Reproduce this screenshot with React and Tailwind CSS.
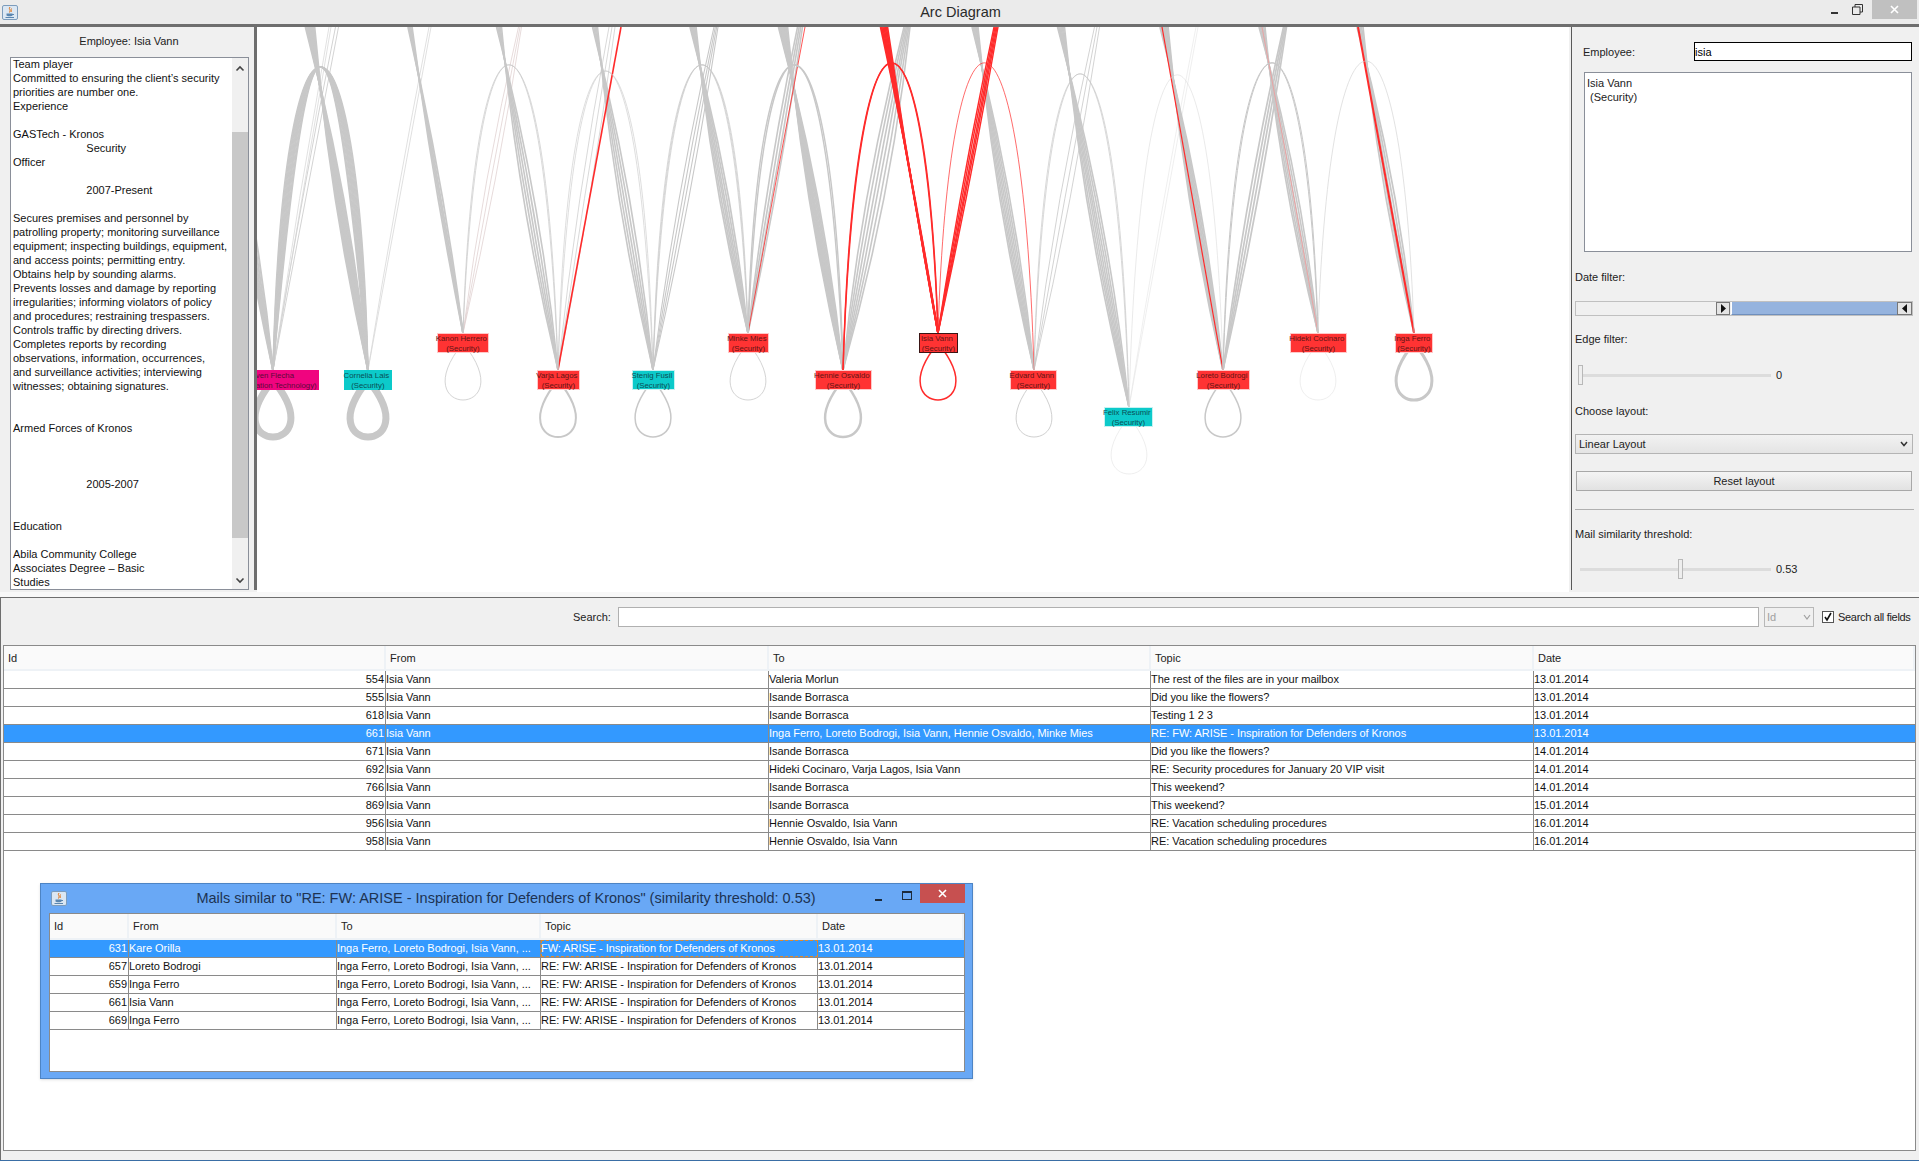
import React from "react";

const GREY = "#c8c8c8";
const RED = "#ff2b2b";

const NODES = [
  { name: "Sven Flecha", dept: "(Information Technology)", cx: 273, left: 229, right: 319, top: 370, box: "bg-[#f0047f] border-[#f0047f] text-[#5c0a3a]" },
  { name: "Cornelia Lais", dept: "(Security)", cx: 368, left: 344, right: 392, top: 370, box: "bg-[#0ccaca] border-[#0ccaca] text-[#0a4f55]" },
  { name: "Kanon Herrero", dept: "(Security)", cx: 463, left: 437, right: 489, top: 333, box: "bg-[#ff3333] border-[#ffc9c9] text-[#5f1414]" },
  { name: "Varja Lagos", dept: "(Security)", cx: 558, left: 537, right: 580, top: 370, box: "bg-[#ff3333] border-[#ffc9c9] text-[#5f1414]" },
  { name: "Stenig Fusil", dept: "(Security)", cx: 653, left: 632, right: 675, top: 370, box: "bg-[#0ccaca] border-[#c5f2f2] text-[#0a4f55]" },
  { name: "Minke Mies", dept: "(Security)", cx: 748, left: 728, right: 769, top: 333, box: "bg-[#ff3333] border-[#ffc9c9] text-[#5f1414]" },
  { name: "Hennie Osvaldo", dept: "(Security)", cx: 843, left: 815, right: 872, top: 370, box: "bg-[#ff3333] border-[#ffc9c9] text-[#5f1414]" },
  { name: "Isia Vann", dept: "(Security)", cx: 938, left: 919, right: 958, top: 333, box: "bg-[#ff3333] border-[#3a1515] text-[#5f1414]" },
  { name: "Edvard Vann", dept: "(Security)", cx: 1034, left: 1010, right: 1057, top: 370, box: "bg-[#ff3333] border-[#ffc9c9] text-[#5f1414]" },
  { name: "Felix Resumir", dept: "(Security)", cx: 1129, left: 1104, right: 1153, top: 407, box: "bg-[#0ccaca] border-[#c5f2f2] text-[#0a4f55]" },
  { name: "Loreto Bodrogi", dept: "(Security)", cx: 1223, left: 1197, right: 1250, top: 370, box: "bg-[#ff3333] border-[#ffc9c9] text-[#5f1414]" },
  { name: "Hideki Cocinaro", dept: "(Security)", cx: 1318, left: 1290, right: 1347, top: 333, box: "bg-[#ff3333] border-[#ffc9c9] text-[#5f1414]" },
  { name: "Inga Ferro", dept: "(Security)", cx: 1414, left: 1395, right: 1433, top: 333, box: "bg-[#ff3333] border-[#ffc9c9] text-[#5f1414]" },
];

// node, x where it leaves the top, spread there, line count, width, colour
const FANS = [
  [0, 216, 8, 6, 2, GREY], [0, 337, 3, 2, 0.8, GREY], [0, 330, 2, 2, 0.7, "#d4d4d4"],
  [1, 310, 9, 8, 2, GREY], [1, 430, 2, 2, 0.8, "#d8d8d8"],
  [2, 410, 4, 4, 1.8, GREY], [2, 520, 3, 3, 0.7, "#dccccc"],
  [3, 499, 5, 5, 1.6, GREY], [3, 612, 6, 3, 0.7, GREY],
  [4, 595, 5, 5, 1.6, GREY], [4, 716, 4, 4, 1.1, GREY],
  [5, 693, 6, 6, 1.7, GREY], [5, 800, 5, 4, 1.6, GREY],
  [6, 783, 9, 9, 1.8, GREY], [6, 907, 6, 6, 1.6, GREY],
  [8, 975, 6, 7, 1.6, GREY], [8, 1097, 5, 3, 0.8, GREY],
  [9, 1061, 7, 7, 1.6, GREY], [9, 1197, 2, 2, 0.6, "#e4e4e4"],
  [10, 1164, 8, 8, 1.8, GREY], [10, 1285, 3, 4, 1.7, GREY],
  [11, 1262, 6, 6, 1.6, GREY],
  [12, 1360, 6, 5, 1.7, GREY],
  [3, 621, 0, 1, 1.6, RED], [5, 805, 0, 1, 0.8, RED],
  [7, 884, 7, 7, 1.7, RED], [7, 996, 4, 5, 1.4, RED],
  [10, 1162, 0, 1, 1.2, RED], [11, 1262, 0, 1, 0.6, "#ff8a8a"], [12, 1358, 0, 1, 2, RED],
];

// left node, right node, peak y, bow from, bow to, line count, width, colour
const ARCHES = [
  [0, 1, 67, 0.1, 0.4, 10, 1.5, GREY],
  [2, 3, 65, 0.12, 0.16, 2, 0.7, GREY],
  [3, 4, 71, 0.1, 0.16, 2, 0.6, GREY],
  [4, 5, 65, 0.1, 0.16, 3, 0.7, GREY],
  [5, 6, 65, 0.1, 0.16, 2, 1.4, GREY],
  [6, 7, 63, 0.12, 0.14, 2, 1.4, RED],
  [7, 8, 63, 0.12, 0.12, 1, 0.7, RED],
  [8, 9, 74, 0.1, 0.14, 2, 0.7, GREY],
  [9, 10, 75, 0.12, 0.12, 1, 0.6, "#dcdcdc"],
  [10, 11, 63, 0.1, 0.14, 2, 1, GREY],
  [11, 12, 61, 0.12, 0.12, 1, 0.6, "#cfcfcf"],
];

// node, loop stroke, colour
const LOOPS = [
  [0, 7, GREY], [1, 7, GREY], [2, 1, "#d4d4d4"], [3, 2, GREY], [4, 1.5, GREY], [5, 1, "#d4d4d4"], [6, 2.5, GREY],
  [7, 1.5, RED], [8, 1, "#d0d0d0"], [9, 0.5, "#dcdcdc"], [10, 1.5, GREY], [11, 0.5, "#dcdcdc"], [12, 3, GREY],
];

const BIO = [
  "Team player", "Committed to ensuring the client’s security", "priorities are number one.", "Experience", "",
  "GASTech - Kronos", "                        Security", "Officer", "", "                        2007-Present", "",
  "Secures premises and personnel by", "patrolling property; monitoring surveillance", "equipment; inspecting buildings, equipment,",
  "and access points; permitting entry.", "Obtains help by sounding alarms.", "Prevents losses and damage by reporting",
  "irregularities; informing violators of policy", "and procedures; restraining trespassers.", "Controls traffic by directing drivers.",
  "Completes reports by recording", "observations, information, occurrences,", "and surveillance activities; interviewing",
  "witnesses; obtaining signatures.", "", "", "Armed Forces of Kronos", "", "", "", "                        2005-2007", "", "",
  "Education", "", "Abila Community College", "Associates Degree – Basic", "Studies",
];

const MAILS = [
  [554, "Isia Vann", "Valeria Morlun", "The rest of the files are in your mailbox", "13.01.2014"],
  [555, "Isia Vann", "Isande Borrasca", "Did you like the flowers?", "13.01.2014"],
  [618, "Isia Vann", "Isande Borrasca", "Testing 1 2 3", "13.01.2014"],
  [661, "Isia Vann", "Inga Ferro, Loreto Bodrogi, Isia Vann, Hennie Osvaldo, Minke Mies", "RE: FW: ARISE - Inspiration for Defenders of Kronos", "13.01.2014"],
  [671, "Isia Vann", "Isande Borrasca", "Did you like the flowers?", "14.01.2014"],
  [692, "Isia Vann", "Hideki Cocinaro, Varja Lagos, Isia Vann", "RE: Security procedures for January 20 VIP visit", "14.01.2014"],
  [766, "Isia Vann", "Isande Borrasca", "This weekend?", "14.01.2014"],
  [869, "Isia Vann", "Isande Borrasca", "This weekend?", "15.01.2014"],
  [956, "Isia Vann", "Hennie Osvaldo, Isia Vann", "RE: Vacation scheduling procedures", "16.01.2014"],
  [958, "Isia Vann", "Hennie Osvaldo, Isia Vann", "RE: Vacation scheduling procedures", "16.01.2014"],
];

const TO_ALL = "Inga Ferro, Loreto Bodrogi, Isia Vann, ...";
const ARISE = "RE: FW: ARISE - Inspiration for Defenders of Kronos";
const SIMILAR = [
  [631, "Kare Orilla", TO_ALL, "FW: ARISE - Inspiration for Defenders of Kronos", "13.01.2014"],
  [657, "Loreto Bodrogi", TO_ALL, ARISE, "13.01.2014"],
  [659, "Inga Ferro", TO_ALL, ARISE, "13.01.2014"],
  [661, "Isia Vann", TO_ALL, ARISE, "13.01.2014"],
  [669, "Inga Ferro", TO_ALL, ARISE, "13.01.2014"],
];

const HEADERS = ["Id", "From", "To", "Topic", "Date"];

function JavaIcon() {
  return (
    <svg width="16" height="15" viewBox="0 0 16 15" className="shrink-0">
      <rect x="0.5" y="0.5" width="15" height="14" rx="1.5" fill="#dbe7f3" stroke="#7c9cbc" />
      <path d="M8 2 C6 4 9.5 5 7.5 7.5 M9.5 3.5 C8.5 5 10 5.5 9 7" fill="none" stroke="#e2761b" strokeWidth="1" />
      <path d="M4.5 8.5 H10.5 V10.5 C10.5 11.5 5 11.5 4.5 10.5 Z M10.5 9 H12 V10 H10.5" fill="#5a86b0" />
      <path d="M3.5 12.5 H12" stroke="#5a86b0" strokeWidth="1" />
    </svg>
  );
}

function Arcs() {
  const path = (d, w, c, key) => <path key={key} d={d} fill="none" stroke={c} strokeWidth={w} />;
  const out = [];
  FANS.forEach(([n, topX, spread, count, w, c], f) => {
    const node = NODES[n];
    // big fans hold arcs of many lengths, so they swell in the middle; the red ones stay tight
    const [lo, hi] = c === RED ? [0.42, 0.56] : count >= 5 ? [0.28, 0.72] : count >= 3 ? [0.36, 0.6] : [0.45, 0.5];
    for (let k = 0; k < count; k++) {
      const s = count > 1 ? k / (count - 1) : 0.5;
      const xt = topX - spread / 2 + spread * s;
      const cpx = node.cx + (xt - node.cx) * (lo + (hi - lo) * s);
      out.push(path(`M${node.cx} ${node.top} Q${cpx} ${(node.top + 27) / 2} ${xt} 27`, w, c, `f${f}-${k}`));
    }
  });
  ARCHES.forEach(([a, b, peak, from, to, count, w, c], i) => {
    const l = NODES[a];
    const r = NODES[b];
    const d = r.cx - l.cx;
    const cy = (peak - (l.top + r.top) / 8) / 0.75;
    for (let k = 0; k < count; k++) {
      const bow = count > 1 ? from + ((to - from) * k) / (count - 1) : from;
      out.push(path(`M${l.cx} ${l.top} C${l.cx + bow * d} ${cy} ${r.cx - bow * d} ${cy} ${r.cx} ${r.top}`, w, c, `a${i}-${k}`));
    }
  });
  LOOPS.forEach(([n, w, c]) => {
    const node = NODES[n];
    const y = node.top + 10;
    out.push(path(`M${node.cx} ${y} C${node.cx - 62} ${y + 76} ${node.cx + 62} ${y + 76} ${node.cx} ${y}`, w, c, `l${n}`));
  });
  return (
    <svg width="1313" height="565" viewBox="257 27 1313 565" className="absolute inset-0">
      {out}
    </svg>
  );
}

function DiagramNode({ node }) {
  return (
    <div
      className={`absolute h-[20px] border leading-[10px] text-[7.8px] ${node.box}`}
      style={{ left: node.left - 257, top: node.top - 27, width: node.right - node.left }}
    >
      <div className="flex justify-center pr-[3px] whitespace-nowrap">{node.name}</div>
      <div className="flex justify-center whitespace-nowrap">{node.dept}</div>
    </div>
  );
}

function SliderRow({ track, thumbAt, value, gap }) {
  return (
    <div className={`flex items-center h-[20px] ${gap}`}>
      <div className={`relative h-[3px] bg-[#dcdcdc] ${track}`}>
        <div className={`absolute top-[-9px] w-[5px] h-[20px] bg-[#eeeeee] border border-[#b8b8b8] ${thumbAt}`} />
      </div>
      <span className="ml-[5px] text-[#222]">{value}</span>
    </div>
  );
}

function MailRow({ row, grid, selected, focusTopic }) {
  const cell = "h-full pr-[1px] border-r truncate leading-[17px] tracking-[-0.04px]";
  return (
    <div className={`grid h-[18px] border-b border-[#8a8a8a] ${grid} ${selected ? "bg-[#3399ff] text-white" : "text-[#111]"}`}>
      <div className={`${cell} border-[#8a8a8a] text-right`}>{row[0]}</div>
      <div className={`${cell} border-[#8a8a8a]`}>{row[1]}</div>
      <div className={`${cell} border-[#8a8a8a]`}>{row[2]}</div>
      <div className={`${cell} ${focusTopic ? "outline-1 outline-dashed -outline-offset-1 outline-[#e08a2c]" : ""} border-[#8a8a8a]`}>{row[3]}</div>
      <div className="h-full truncate leading-[17px] tracking-[-0.04px]">{row[4]}</div>
    </div>
  );
}

function HeaderRow({ grid, height }) {
  return (
    <div className={`grid bg-[#fafafa] border-b-2 border-[#eef2f6] text-[#222] ${height} ${grid}`}>
      {HEADERS.map((h) => (
        <div key={h} className="pl-[4px] leading-[24px] border-r-2 border-[#eef2f6]">{h}</div>
      ))}
    </div>
  );
}

export default function App() {
  const mainGrid = "grid-cols-[382px_383px_382px_383px_1fr]";
  const subGrid = "grid-cols-[79px_208px_204px_277px_1fr]";
  return (
    <div className="relative w-[1919px] h-[1161px] overflow-hidden bg-[#f0f0f0] text-[11px] text-[#111] font-['Liberation_Sans',sans-serif]">
      {/* title bar */}
      <div className="flex items-center h-[24px] bg-[#ebebeb] pl-[2px]">
        <JavaIcon />
        <div className="flex-1 pt-[1px] text-center text-[14.5px] text-[#2a2a2a] pl-[72px]">Arc Diagram</div>
        <div className="w-[7px] h-[2px] mt-[2px] bg-[#333]" />
        <svg width="11" height="11" viewBox="0 0 11 11" className="ml-[14px] mb-[6px]">
          <path d="M0.5 3 H8 V10.5 H0.5 Z M3 3 V0.5 H10.5 V8 H8" fill="none" stroke="#333" />
        </svg>
        <div className="flex items-center justify-center self-start w-[45px] h-[19px] ml-[9px] mr-[2px] bg-[#c0c0c0]">
          <svg width="9" height="9" viewBox="0 0 9 9"><path d="M1 1 L8 8 M8 1 L1 8" stroke="#fff" strokeWidth="1.6" /></svg>
        </div>
      </div>
      <div className="h-[3px] bg-[#6e6e6e]" />

      {/* top section */}
      <div className="flex h-[565px]">
        <div className="flex flex-col w-[254px] pl-[2px]">
          <div className="h-[30px] pt-[6px] text-center text-[#222] pl-[2px] tracking-[-0.05px]">Employee: Isia Vann</div>
          <div className="relative ml-[8px] w-[239px] h-[533px] bg-white border border-[#8a8f99] overflow-hidden">
            <div className="pl-[2px] -mt-[1px]">
              {BIO.map((line, i) => (
                <div key={i} className="h-[14px] leading-[14px] whitespace-pre">{line}</div>
              ))}
            </div>
            <div className="absolute top-0 right-0 w-[16px] h-full bg-[#f0f0f0]">
              <svg width="16" height="16" viewBox="0 0 16 16" className="absolute top-[3px]">
                <path d="M4.5 9.5 L8 6 L11.5 9.5" fill="none" stroke="#444" strokeWidth="1.6" />
              </svg>
              <div className="absolute top-[74px] w-full h-[406px] bg-[#c8c8c8]" />
              <svg width="16" height="16" viewBox="0 0 16 16" className="absolute bottom-[1px]">
                <path d="M4.5 6.5 L8 10 L11.5 6.5" fill="none" stroke="#444" strokeWidth="1.6" />
              </svg>
            </div>
          </div>
        </div>
        <div className="w-[3px] h-[563px] bg-[#6e6e6e]" />
        <div className="relative w-[1313px] bg-white overflow-hidden">
          <Arcs />
          {NODES.map((n) => <DiagramNode key={n.name} node={n} />)}
        </div>
        <div className="w-[3px] h-[563px] bg-[#f0f0f0] border-r border-[#5a5a5a]" />

        {/* right controls */}
        <div className="flex-1 pl-[3px] pr-[5px] text-[#222]">
          <div className="flex items-center h-[19px] mt-[15px] pl-[8px]">
            <span className="w-[111px] pt-[1px]">Employee:</span>
            <input readOnly value="isia" className="w-[218px] h-[19px] bg-white border border-black outline-none text-[11px] text-black" />
          </div>
          <div className="ml-[9px] mt-[11px] w-[328px] h-[180px] bg-white border border-[#8a8f99] pt-[3px] pl-[2px] leading-[14px] whitespace-pre">
            <div>Isia Vann</div>
            <div> (Security)</div>
          </div>
          <div className="h-[14px] leading-[14px] mt-[18px]">Date filter:</div>
          <div className="flex h-[15px] w-[338px] mt-[17px] bg-[#f0f0f0] border border-[#c0c0c0]">
            <div className="flex-1" />
            <div className="flex items-center justify-center w-[14px] bg-[#e4e4e4] border border-[#777]">
              <svg width="6" height="9" viewBox="0 0 6 9"><path d="M1 0 L6 4.5 L1 9 Z" fill="#111" /></svg>
            </div>
            <div className="w-[166px] ml-[1px] bg-[#95b3de] border-l border-white border-b border-b-[#6f8fbd]" />
            <div className="flex items-center justify-center w-[15px] bg-[#e4e4e4] border border-[#777]">
              <svg width="6" height="9" viewBox="0 0 6 9"><path d="M5 0 L0 4.5 L5 9 Z" fill="#111" /></svg>
            </div>
          </div>
          <div className="h-[14px] leading-[14px] mt-[16px]">Edge filter:</div>
          <div className="pl-[3px]">
            <SliderRow track="w-[193px]" thumbAt="left-0" value="0" gap="mt-[19px]" />
          </div>
          <div className="h-[14px] leading-[14px] mt-[19px]">Choose layout:</div>
          <div className="flex items-center justify-between h-[20px] w-[338px] mt-[16px] px-[3px] border border-[#b4b4b4] bg-linear-to-b from-[#f2f2f2] to-[#e4e4e4]">
            <span>Linear Layout</span>
            <svg width="10" height="8" viewBox="0 0 10 8"><path d="M2 2 L5 5.5 L8 2" fill="none" stroke="#333" strokeWidth="1.5" /></svg>
          </div>
          <div className="flex items-center justify-center h-[20px] w-[336px] ml-[1px] mt-[17px] border border-[#a8a8a8] bg-linear-to-b from-[#f4f4f4] to-[#e2e2e2]">Reset layout</div>
          <div className="h-[1px] w-[339px] mt-[18px] bg-[#b0b0b0]" />
          <div className="h-[14px] leading-[14px] mt-[17px]">Mail similarity threshold:</div>
          <div className="pl-[5px]">
            <SliderRow track="w-[191px]" thumbAt="left-[98px]" value="0.53" gap="mt-[18px]" />
          </div>
        </div>
      </div>

      {/* bottom section */}
      <div className="h-[5px] bg-[#f8f8f8]" />
      <div className="flex flex-col h-[564px] border-t border-l border-[#6e6e6e]">
        <div className="flex items-center h-[20px] mt-[9px] pl-[572px] text-[#222]">
          <span className="w-[45px]">Search:</span>
          <div className="w-[1141px] h-[20px] bg-white border border-[#b0b0b0]" />
          <div className="flex items-center justify-between w-[50px] h-[20px] ml-[5px] px-[2px] border border-[#b8b8b8] text-[#a0a0a0]">
            <span>Id</span>
            <svg width="8" height="6" viewBox="0 0 8 6"><path d="M1 1 L4 5 L7 1" fill="none" stroke="#a0a0a0" strokeWidth="1.2" /></svg>
          </div>
          <div className="flex items-center justify-center w-[12px] h-[12px] ml-[8px] bg-white border border-[#555]">
            <svg width="10" height="10" viewBox="0 0 10 10"><path d="M2 5 L4 8 L8 1" fill="none" stroke="#111" strokeWidth="1.6" /></svg>
          </div>
          <span className="ml-[4px] tracking-[-0.3px]">Search all fields</span>
        </div>
        <div className="flex-1 ml-[2px] mr-[3px] mt-[18px] mb-[10px] bg-white border border-[#8a8a8a]">
          <HeaderRow grid={mainGrid} height="h-[25px]" />
          {MAILS.map((m) => <MailRow key={m[0]} row={m} grid={mainGrid} selected={m[0] === 661} />)}
        </div>
      </div>
      <div className="absolute left-0 bottom-0 w-full h-[1px] bg-[#3a6ea5]" />

      {/* floating similar mails window */}
      <div className="absolute left-[40px] top-[883px] w-[933px] h-[196px] bg-[#69a8f5] border border-[#4d84c4] shadow-sm">
        <div className="relative flex items-center h-[29px] pl-[10px]">
          <JavaIcon />
          <div className="flex-1 text-center text-[14.5px] text-[#1d3352] pl-[70px] whitespace-nowrap">
            Mails similar to "RE: FW: ARISE - Inspiration for Defenders of Kronos" (similarity threshold: 0.53)
          </div>
          <div className="w-[7px] h-[2px] mt-[2px] bg-[#1d2b3c]" />
          <div className="w-[10px] h-[9px] ml-[20px] mb-[6px] border border-[#1d2b3c] border-t-2" />
          <div className="flex items-center justify-center self-start w-[45px] h-[19px] ml-[8px] mr-[7px] bg-[#c75050]">
            <svg width="9" height="9" viewBox="0 0 9 9"><path d="M1 1 L8 8 M8 1 L1 8" stroke="#fff" strokeWidth="1.6" /></svg>
          </div>
        </div>
        <div className="ml-[8px] w-[916px] h-[159px] bg-white border border-[#8a8a8a]">
          <HeaderRow grid={subGrid} height="h-[26px]" />
          {SIMILAR.map((m, i) => <MailRow key={m[0]} row={m} grid={subGrid} selected={i === 0} focusTopic={i === 0} />)}
        </div>
      </div>
    </div>
  );
}
